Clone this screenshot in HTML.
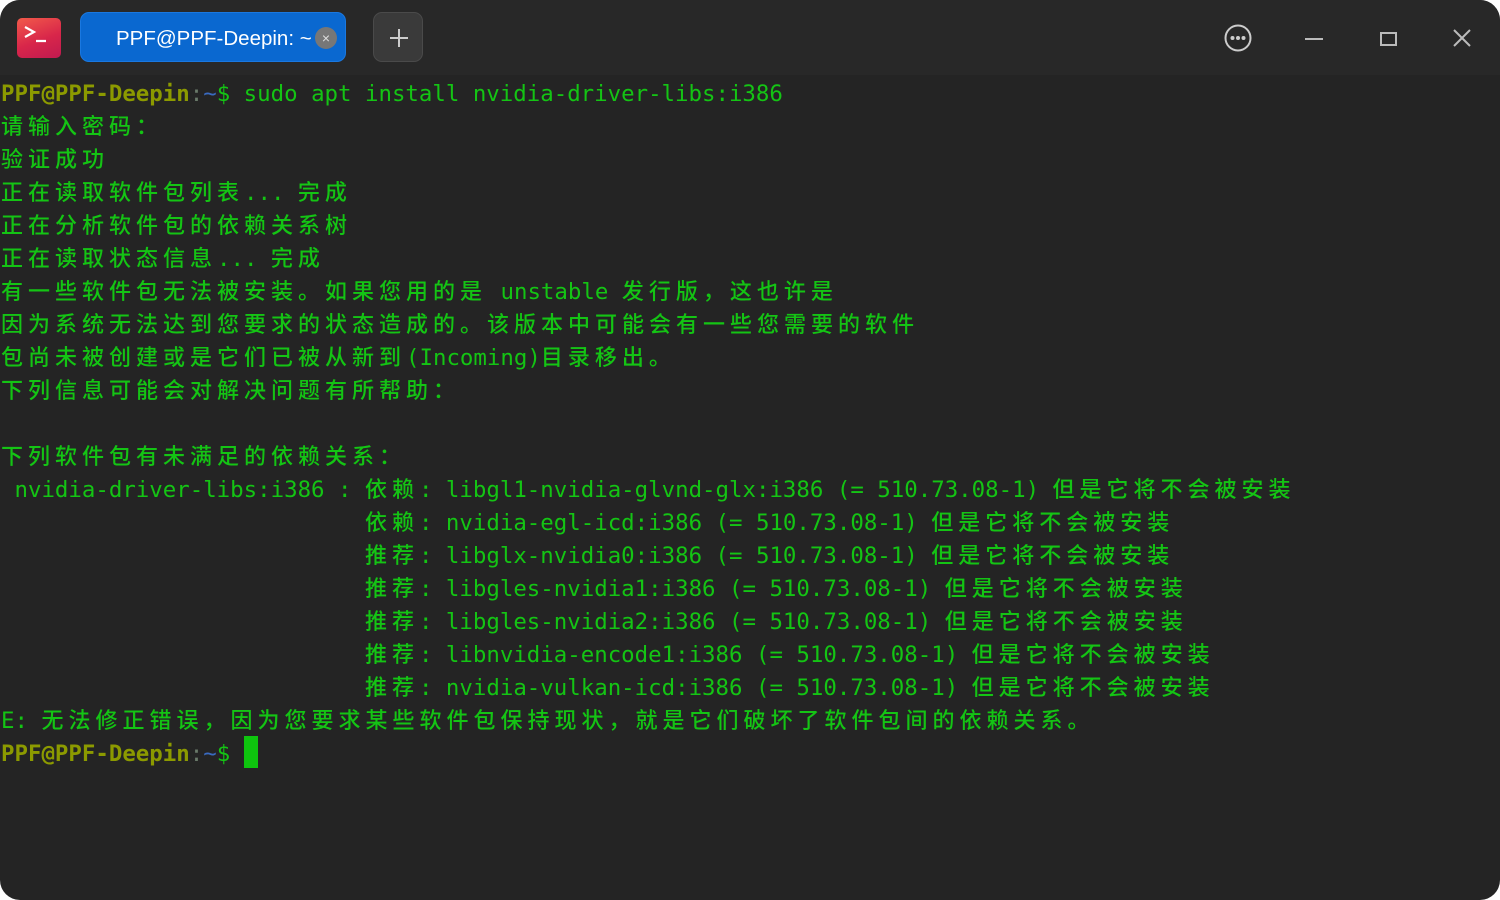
<!DOCTYPE html>
<html><head><meta charset="utf-8"><style>
html,body{margin:0;padding:0;background:#fff;width:1500px;height:900px;overflow:hidden}
.win{position:absolute;left:0;top:0;width:1500px;height:900px;background:#242424;border-radius:20px;overflow:hidden}
.tb{position:absolute;left:0;top:0;width:1500px;height:75px;background:#282828}
.logo{position:absolute;left:17px;top:18px;width:44px;height:40px;border-radius:5px;background:linear-gradient(160deg,#f25a4a,#d8264a 55%,#c01a50)}
.tab{position:absolute;left:80px;top:12px;width:266px;height:50px;border-radius:9px;background:#0a68d0;border:1px solid #1a78e0;box-sizing:border-box;color:#fff;font:20.5px "Liberation Sans","DejaVu Sans",sans-serif;line-height:52px;padding-left:35px;white-space:nowrap}
.tab .x{position:absolute;left:234px;top:14px;width:22px;height:22px;border-radius:11px;background:#777;color:#ddd;font-size:14px;line-height:22px;text-align:center}
.plus{position:absolute;left:373px;top:12px;width:50px;height:50px;border-radius:9px;background:#3a3a3a;border:1px solid #4a4a4a;box-sizing:border-box}
.term{position:absolute;left:1px;top:78px;font-family:"DejaVu Sans Mono","Liberation Mono","Noto Sans CJK SC",monospace;font-size:22.4px;color:#14c414;white-space:pre}
.term div{height:33px;line-height:33px;position:relative}
.term div.m{top:-2px}
.c{display:inline-block;width:27px;text-align:left;font-family:"Noto Sans CJK SC",sans-serif;font-size:22px;font-weight:500}
.u{color:#8c9a00;font-weight:bold}.g{color:#6a7a6a}.b{color:#3a6ac0}
.cur{display:inline-block;width:14px;height:32px;background:#0ec40e;vertical-align:-7px}
</style></head><body><div class="win">
<div class="tb">
<div class="logo"><svg width="44" height="40"><path d="M8 9l9 5-9 5" stroke="#fff" stroke-width="2.2" fill="none"/><path d="M19 23h10" stroke="#fff" stroke-width="2.2"/></svg></div>
<div class="tab">PPF@PPF-Deepin: ~<div class="x">×</div></div>
<div class="plus"><svg width="50" height="50"><path d="M25 16v18M16 25h18" stroke="#ccc" stroke-width="2"/></svg></div>
<svg style="position:absolute;left:1220px;top:20px" width="36" height="36"><circle cx="18" cy="18" r="12.5" stroke="#ccc" stroke-width="2" fill="none"/><circle cx="12.5" cy="18" r="2" fill="#ccc"/><circle cx="18" cy="18" r="2" fill="#ccc"/><circle cx="23.5" cy="18" r="2" fill="#ccc"/></svg>
<svg style="position:absolute;left:1300px;top:20px" width="200" height="36"><path d="M5 19h18" stroke="#bbb" stroke-width="2"/><rect x="81" y="13" width="15" height="12" stroke="#bbb" stroke-width="2" fill="none"/><path d="M154 10l16 16M170 10l-16 16" stroke="#bbb" stroke-width="2"/></svg>
</div>
<div class="term" id="t"><div><span class="u">PPF@PPF-Deepin</span><span class="g">:</span><span class="b">~</span>$ sudo apt install nvidia-driver-libs:i386</div><div>请输入密码：</div><div>验证成功</div><div>正在读取软件包列表... 完成</div><div>正在分析软件包的依赖关系树</div><div>正在读取状态信息... 完成</div><div>有一些软件包无法被安装。如果您用的是 unstable 发行版，这也许是</div><div>因为系统无法达到您要求的状态造成的。该版本中可能会有一些您需要的软件</div><div>包尚未被创建或是它们已被从新到(Incoming)目录移出。</div><div>下列信息可能会对解决问题有所帮助：</div><div> </div><div>下列软件包有未满足的依赖关系：</div><div> nvidia-driver-libs:i386 : 依赖: libgl1-nvidia-glvnd-glx:i386 (= 510.73.08-1) 但是它将不会被安装</div><div>                           依赖: nvidia-egl-icd:i386 (= 510.73.08-1) 但是它将不会被安装</div><div>                           推荐: libglx-nvidia0:i386 (= 510.73.08-1) 但是它将不会被安装</div><div>                           推荐: libgles-nvidia1:i386 (= 510.73.08-1) 但是它将不会被安装</div><div>                           推荐: libgles-nvidia2:i386 (= 510.73.08-1) 但是它将不会被安装</div><div>                           推荐: libnvidia-encode1:i386 (= 510.73.08-1) 但是它将不会被安装</div><div>                           推荐: nvidia-vulkan-icd:i386 (= 510.73.08-1) 但是它将不会被安装</div><div>E: 无法修正错误，因为您要求某些软件包保持现状，就是它们破坏了软件包间的依赖关系。</div><div class="m"><span class="u">PPF@PPF-Deepin</span><span class="g">:</span><span class="b">~</span>$ <span class="cur"></span></div></div>
</div>
<script>
(function(){var w=document.createTreeWalker(document.getElementById('t'),NodeFilter.SHOW_TEXT),n,a=[];while(n=w.nextNode())a.push(n);
a.forEach(function(t){var s=t.nodeValue;if(!/[^\x00-\x7f]/.test(s))return;t.parentNode.classList.add('m');var f=document.createDocumentFragment(),buf='';
for(var ch of s){if(ch.charCodeAt(0)>127){if(buf){f.appendChild(document.createTextNode(buf));buf=''}var sp=document.createElement('span');sp.className='c';sp.textContent=ch;f.appendChild(sp)}else buf+=ch}
if(buf)f.appendChild(document.createTextNode(buf));t.parentNode.replaceChild(f,t)})})();
</script>
</body></html>
